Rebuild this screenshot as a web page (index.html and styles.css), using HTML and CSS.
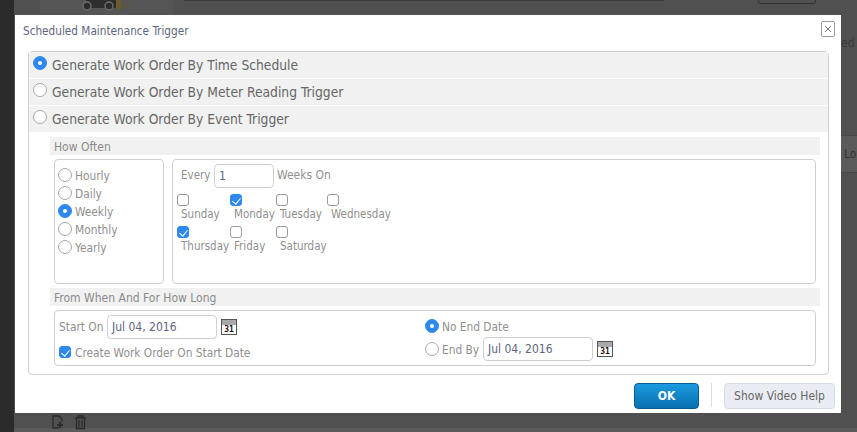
FILE: index.html
```html
<!DOCTYPE html>
<html lang="en">
<head>
<meta charset="utf-8">
<title>Scheduled Maintenance Trigger</title>
<link rel="stylesheet" href="styles.css">
</head>
<body>
<div class="backdrop">
  <div class="bg-left"></div>
  <div class="bg-col"></div>
  <div class="bg-row"><span>Lo</span></div>
  <div class="bg-foot"></div>
  <svg class="bg-truck" width="50" height="14" viewBox="0 0 50 14"><rect x="34" y="0" width="5" height="9" fill="#6b5a2c"/><path d="M39 6h9" stroke="#5f5636" stroke-width="2"/><path d="M4 0h30v8H4z" fill="#2e2e2e"/><circle cx="5" cy="6" r="4" fill="#2c2c2c" stroke="#6f6f6f" stroke-width="1.4"/><circle cx="27" cy="6" r="4" fill="#2c2c2c" stroke="#6f6f6f" stroke-width="1.4"/></svg>
  <div class="bg-line"></div>
  <div class="bg-btn"></div>
  <div class="bg-text-ed">ed</div>
  <svg class="bg-tools" width="40" height="16" viewBox="0 0 40 16" fill="none" stroke="#2b2b2b" stroke-width="1.3"><path d="M9 14H3V2h6l3 3v3"/><path d="M10 8v6M7 11h6" stroke-width="2"/><path d="M25 4h11M28 4V2h5v2M26.5 4v10.5h8V4M29 6v7M32 6v7"/></svg>
</div>
<section class="modal">
  <header class="modal-head">
    <h1 class="modal-title">Scheduled Maintenance Trigger</h1>
    <button class="close" aria-label="Close"><svg width="8" height="8" viewBox="0 0 8 8"><path d="M1 1l6 6M7 1L1 7" stroke="#777" stroke-width="1"/></svg></button>
  </header>
  <div class="panel">
    <div class="trigger"><span class="radio on"></span>Generate Work Order By Time Schedule</div>
    <div class="trigger"><span class="radio"></span>Generate Work Order By Meter Reading Trigger</div>
    <div class="trigger"><span class="radio"></span>Generate Work Order By Event Trigger</div>
    <div class="body">
      <div class="section-title">How Often</div>
      <div class="often">
        <div class="box freq">
          <div class="freq-row"><span class="radio"></span>Hourly</div>
          <div class="freq-row"><span class="radio"></span>Daily</div>
          <div class="freq-row"><span class="radio on"></span>Weekly</div>
          <div class="freq-row"><span class="radio"></span>Monthly</div>
          <div class="freq-row"><span class="radio"></span>Yearly</div>
        </div>
        <div class="box days">
          <div class="every"><span class="every-lbl">Every</span><span class="input small">1</span><span class="weeks-lbl">Weeks On</span></div>
          <div class="day-grid">
            <div class="day"><span class="check"></span><span class="lbl">Sunday</span></div>
            <div class="day"><span class="check on"></span><span class="lbl">Monday</span></div>
            <div class="day"><span class="check"></span><span class="lbl">Tuesday</span></div>
            <div class="day"><span class="check"></span><span class="lbl">Wednesday</span></div>
            <div class="day"><span class="check on"></span><span class="lbl">Thursday</span></div>
            <div class="day"><span class="check"></span><span class="lbl">Friday</span></div>
            <div class="day"><span class="check"></span><span class="lbl">Saturday</span></div>
          </div>
        </div>
      </div>
      <div class="section-title second">From When And For How Long</div>
      <div class="box when">
        <div class="when-col">
          <div class="line"><span class="start-lbl">Start On</span><span class="input date">Jul 04, 2016</span><span class="cal"><b>31</b></span></div>
          <div class="line create"><span class="check on"></span><span class="low">Create Work Order On Start Date</span></div>
        </div>
        <div class="when-col right">
          <div class="line noend"><span class="radio on"></span><span class="low">No End Date</span></div>
          <div class="line"><span class="radio"></span><span class="end-lbl low">End By</span><span class="input date">Jul 04, 2016</span><span class="cal"><b>31</b></span></div>
        </div>
      </div>
    </div>
  </div>
  <footer class="foot">
    <button class="ok">OK</button>
    <span class="sep"></span>
    <button class="help">Show Video Help</button>
  </footer>
</section>
</body>
</html>
```
FILE: styles.css
```css
* { box-sizing: border-box; }
html, body { margin: 0; height: 432px; overflow: hidden; }
body { background: #505050; font-family: "DejaVu Sans Condensed", "DejaVu Sans", sans-serif; color: #8f8f8f; position: relative; }
.backdrop { position: absolute; inset: 0; overflow: hidden; }
.bg-left { position: absolute; left: 0; top: 0; bottom: 0; width: 14px; background: #2b2b2b; }
.bg-col { position: absolute; left: 40px; top: 0; width: 133px; height: 15px; background: #555; }
.bg-row { position: absolute; left: 841px; right: 0; top: 135px; height: 38px; background: #5a5a5a; border-top: 1px solid #484848; border-bottom: 1px solid #484848; font-size: 12px; line-height: 36px; color: #333; padding-left: 3px; }
.bg-foot { position: absolute; left: 14px; right: 0; top: 428px; bottom: 0; background: #5a5a5a; }
.bg-truck { position: absolute; left: 82px; top: 0; }
.bg-line { position: absolute; left: 184px; width: 480px; top: 0; height: 1px; background: #3a3a3a; }
.bg-btn { position: absolute; left: 758px; top: -10px; width: 58px; height: 14px; border: 1px solid #333; border-radius: 3px; }
.bg-text-ed { position: absolute; left: 841px; top: 36px; font-size: 12px; color: #3a3a3a; }
.bg-tools { position: absolute; left: 50px; top: 414px; }
.modal { position: absolute; left: 15px; top: 15px; width: 826px; height: 398px; background: #fff; display: flex; flex-direction: column; }
.modal-head { height: 36px; padding: 0 0 0 8px; display: flex; justify-content: space-between; flex: none; }
.modal-title { margin: 8px 0 0; font-size: 11.7px; line-height: 17px; font-weight: 400; color: #5f6580; }
.close { margin: 6px 6px 0 0; width: 14px; height: 16px; padding: 0; background: #fff; border: 1px solid #9a9a9a; border-radius: 2px; display: flex; align-items: center; justify-content: center; }
.panel { margin-left: 13px; width: 801px; height: 324px; flex: none; border: 1px solid #d0d0d0; border-radius: 4px; }
.trigger { height: 26px; margin-bottom: 1px; background: #f1f1f1; display: flex; align-items: center; font-size: 13.72px; color: #666; padding-left: 4px; gap: 5px; }
.trigger .radio { margin-top: -4px; }
.radio { flex: none; display: inline-block; width: 14px; height: 14px; border-radius: 50%; border: 1px solid #a8a8a8; background: #fff; position: relative; }
.radio.on { background: #2f88ee; border-color: #2f88ee; }
.radio.on::after { content: ""; position: absolute; left: 4px; top: 4px; width: 4px; height: 4px; border-radius: 50%; background: #fff; }
.body { padding: 4px 8px 0 21px; }
.section-title { height: 18px; background: #f1f1f1; font-size: 12px; line-height: 20px; padding-left: 4px; color: #8a8a8a; }
.section-title.second { margin-top: 4px; }
.box { border: 1px solid #cfcfcf; border-radius: 4px; background: #fff; }
.often { display: flex; gap: 8px; margin: 4px 4px 0; height: 125px; }
.freq { width: 110px; flex: none; padding: 6px 0 0 3px; }
.freq-row { height: 18px; padding-top: 2px; display: flex; align-items: center; gap: 3px; font-size: 11.8px; }
.freq-row .radio { margin-top: -2px; }
.days { flex: 1; padding: 4px 0 0 4px; }
.every { display: flex; align-items: center; gap: 3px; font-size: 11.5px; height: 24px; margin-left: 4px; }
.every-lbl { width: 30px; padding-bottom: 2px; }
.weeks-lbl { font-size: 12px; padding-bottom: 2px; }
.input { display: inline-flex; align-items: center; border: 1px solid #cfcfcf; border-radius: 4px; background: #fff; color: #5f6580; padding-left: 4px; font-size: 12px; }
.small { width: 60px; height: 24px; }
.date { width: 110px; height: 24px; }
.day-grid { display: grid; grid-template-columns: 53px 46px 51px auto; justify-content: start; margin-top: 3px; }
.day { height: 32px; display: flex; flex-direction: column; font-size: 11.5px; white-space: nowrap; }
.day .check { margin-top: 3px; }
.lbl { padding-left: 4px; line-height: 16px; }
.check { flex: none; display: inline-block; width: 12px; height: 12px; border: 1px solid #9a9a9a; border-radius: 3px; background: #fff; position: relative; }
.check.on { background: #2f88ee; border-color: #2f88ee; }
.check.on::after { content: ""; position: absolute; left: 3px; top: 1px; width: 4px; height: 7px; border: solid #fff; border-width: 0 1.5px 1.5px 0; transform: rotate(40deg); }
.when { margin: 4px 4px 0; height: 56px; display: grid; grid-template-columns: 366px 1fr; padding: 4px 0 0 4px; }
.line { display: flex; align-items: center; gap: 4px; font-size: 11.8px; }
.low { padding-top: 2px; }
.start-lbl { width: 44px; white-space: nowrap; }
.end-lbl { width: 38px; white-space: nowrap; }
.create { margin-top: 6px; height: 14px; }
.noend { height: 22px; gap: 3px; }
.right .line { gap: 3px; }
.right .cal { margin-left: 1px; }
.cal { width: 16px; height: 16px; border: 1px solid #555; background: linear-gradient(#a9a9a9 0 5px, #fff 5px); display: flex; align-items: flex-end; justify-content: center; }
.cal b { font: 700 8px/9px "DejaVu Sans Mono", monospace; color: #111; }
.foot { display: flex; align-items: flex-start; justify-content: flex-end; padding: 8px 6px 0 0; gap: 12px; }
.ok { width: 65px; height: 26px; border: 1px solid #0b5a90; border-radius: 4px; background: linear-gradient(#1a9ae0, #0a6fb0); color: #fff; font: 700 12px "DejaVu Sans Condensed", sans-serif; }
.sep { width: 1px; height: 24px; background: #ddd; }
.help { width: 111px; height: 26px; border: 1px solid #d5dbe5; border-radius: 4px; background: #e9edf3; color: #666; font: 400 12px "DejaVu Sans Condensed", sans-serif; padding: 0; }
```
